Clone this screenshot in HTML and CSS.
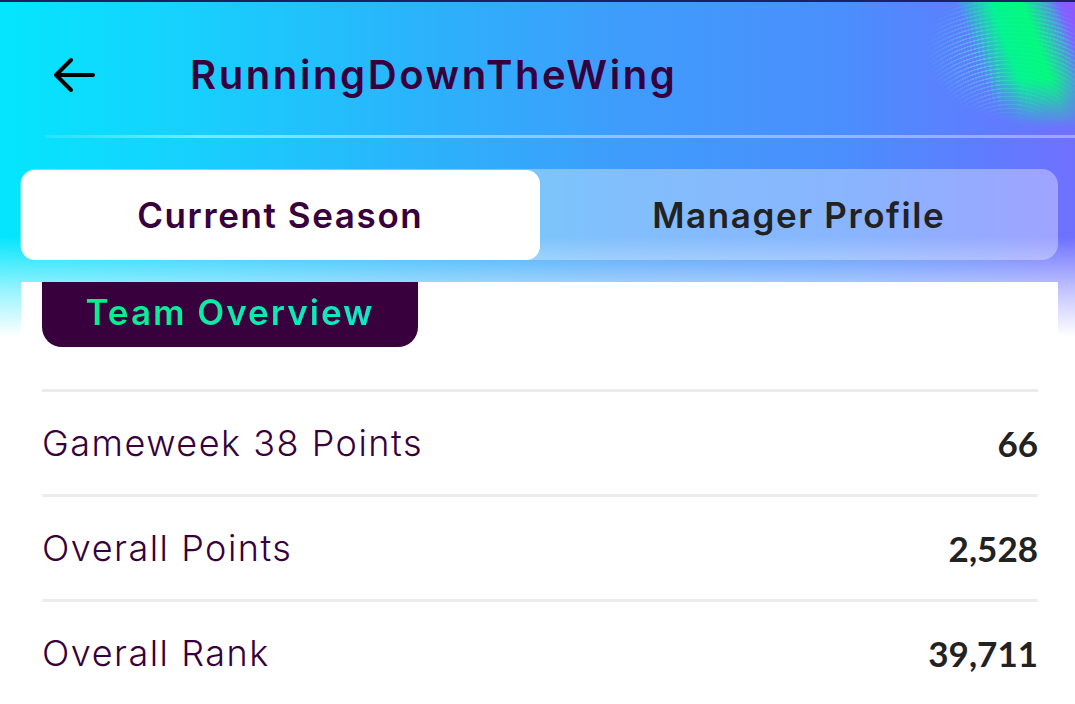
FILE: index.html
```html
<!DOCTYPE html>
<html lang="en">
<head>
    <meta charset="UTF-8">
    <meta name="viewport" content="width=device-width, initial-scale=1.0">
    <title>RunningDownTheWing</title>
    <link rel="stylesheet" href="styles.css">
</head>
<body>
    <div class="page">
        <!-- Декоративные волны в правом верхнем углу -->
        <div class="waves"></div>
        <div class="glow"></div>

        <!-- Верхняя панель -->
        <header class="top-bar">
            <button class="back-btn" aria-label="Back">
                <svg width="44" height="44" viewBox="0 0 44 44">
                    <path d="M41 22 H4 M19 7 L4 22 L19 37" fill="none" stroke="#000" stroke-width="4" stroke-linecap="round" stroke-linejoin="round"/>
                </svg>
            </button>
            <h1 class="title">RunningDownTheWing</h1>
        </header>
        <div class="top-line"></div>

        <!-- Вкладки -->
        <div class="tabs">
            <button class="tab active">Current Season</button>
            <button class="tab">Manager Profile</button>
        </div>

        <!-- Карточка с данными -->
        <div class="card">
            <div class="pill"><span class="pill-text">Team Overview</span></div>
            <div class="rows">
                <div class="row">
                    <span class="label">Gameweek 38 Points</span>
                    <span class="value">66</span>
                </div>
                <div class="row">
                    <span class="label">Overall Points</span>
                    <span class="value">2,528</span>
                </div>
                <div class="row">
                    <span class="label">Overall Rank</span>
                    <span class="value">39,711</span>
                </div>
            </div>
        </div>
    </div>
</body>
</html>
```

FILE: styles.css
```css
/* Основа страницы */
html, body {
    margin: 0;
    padding: 0;
    background-color: #ffffff;
    font-family: "Inter", "Noto Sans", sans-serif;
}

.page {
    position: relative;
    width: 1075px;
    height: 704px;
    overflow: hidden;
    border-top: 2px solid #1d1f5e;
    box-sizing: border-box;
    background:
        linear-gradient(to bottom, rgba(255, 255, 255, 0) 235px, rgba(255, 255, 255, 0.6) 290px, #ffffff 335px),
        linear-gradient(90deg, #04e6fd 0%, #17d0fd 18%, #2ab4fb 38%, #3f9cfb 58%, #4a8ffd 78%, #5f7cff 92%, #7070ff 100%);
}

/* Волны справа сверху */
.waves {
    position: absolute;
    top: 0;
    right: 0;
    width: 170px;
    height: 140px;
    background: repeating-radial-gradient(circle at 105px 175px, rgba(90, 235, 225, 0.5) 0 1.5px, rgba(90, 235, 225, 0) 1.5px 4px);
    -webkit-mask-image: radial-gradient(ellipse 85px 70px at 62% 35%, #000 40%, transparent 100%);
    mask-image: radial-gradient(ellipse 85px 70px at 62% 35%, #000 40%, transparent 100%);
    pointer-events: none;
}

/* Зелёная полоса */
.glow {
    position: absolute;
    top: 0;
    right: 0;
    width: 170px;
    height: 140px;
    background:
        linear-gradient(70deg, rgba(0, 255, 130, 0) 46%, rgba(0, 250, 140, 0.95) 62%, rgba(0, 255, 120, 0.95) 76%, rgba(110, 100, 255, 0) 92%),
        linear-gradient(65deg, rgba(120, 90, 255, 0) 88%, rgba(150, 80, 255, 0.7) 96%);
    -webkit-mask-image: linear-gradient(to bottom, #000 55%, transparent 90%);
    mask-image: linear-gradient(to bottom, #000 55%, transparent 90%);
    pointer-events: none;
}

/* Верхняя панель */
.top-bar {
    display: flex;
    align-items: center;
    height: 121px;
    padding-top: 12px;
    padding-left: 52px;
}

.back-btn {
    background: none;
    border: none;
    padding: 0;
    width: 44px;
    height: 44px;
    cursor: pointer;
}

.title {
    margin: 0 0 0 94px;
    font-size: 40px;
    font-weight: 600;
    color: #37003c;
    letter-spacing: 2.6px;
}

/* Тонкая линия под заголовком */
.top-line {
    position: relative;
    height: 3px;
    margin-left: 45px;
    background: linear-gradient(90deg, rgba(255, 255, 255, 0.1), rgba(255, 255, 255, 0.45) 15%, rgba(255, 255, 255, 0.35));
}

/* Вкладки */
.tabs {
    position: relative;
    display: flex;
    margin: 31px 17px 0 20px;
    height: 91px;
    border-radius: 16px;
    background-color: rgba(255, 255, 255, 0.35);
}

.tab {
    flex: 1;
    border: none;
    background: none;
    border-radius: 14px;
    font-family: "Inter", "Noto Sans", sans-serif;
    font-size: 35px;
    font-weight: 600;
    letter-spacing: 1.6px;
    color: #222222;
    cursor: pointer;
}

.tab.active {
    background-color: #ffffff;
    color: #37003c;
    margin: 1px 0 0 1px;
}

/* Карточка */
.card {
    position: relative;
    margin: 22px 17px 0 21px;
    background-color: #ffffff;
    padding: 0 20px 0 21px;
}

.pill {
    display: flex;
    justify-content: center;
    width: 376px;
    height: 65px;
    box-sizing: border-box;
    padding-top: 9px;
    background-color: #38003c;
    border-radius: 0 0 20px 20px;
}

.pill-text {
    font-size: 35px;
    font-weight: 600;
    letter-spacing: 2px;
    background: linear-gradient(90deg, #05f08a, #12e6c8);
    -webkit-background-clip: text;
    background-clip: text;
    color: transparent;
}

.rows {
    margin-top: 42px;
    border-top: 3px solid #ececec;
}

.row {
    display: flex;
    justify-content: space-between;
    align-items: center;
    height: 102px;
    border-bottom: 3px solid #ececec;
}

.label {
    font-size: 36px;
    font-weight: 300;
    letter-spacing: 1.5px;
    color: #37003c;
}

.value {
    font-family: "Lato", sans-serif;
    font-size: 35px;
    font-weight: 700;
    color: #222222;
}
```
